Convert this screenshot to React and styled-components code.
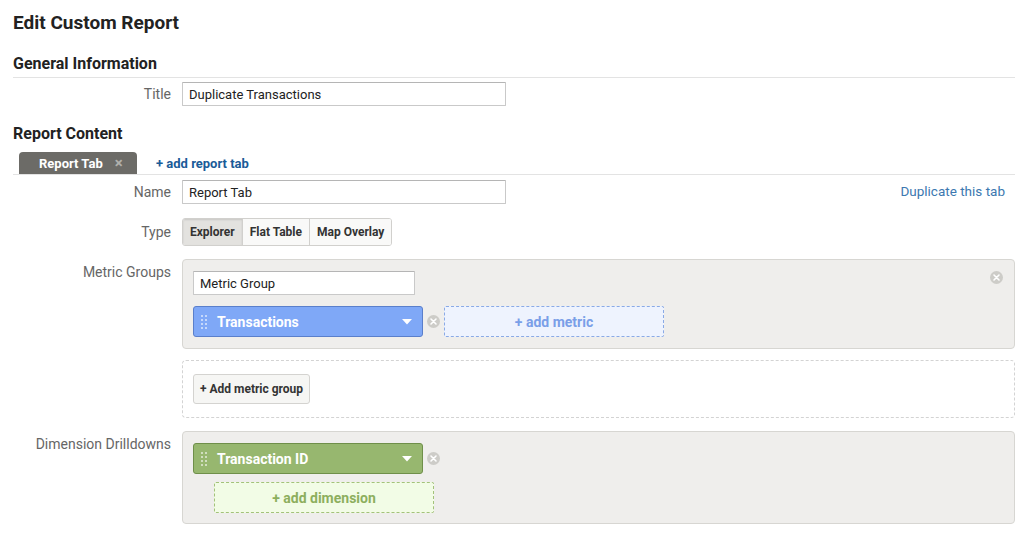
import React from 'react'
import styled, { createGlobalStyle } from 'styled-components'

const GlobalStyle = createGlobalStyle`
  html, body {
    margin: 0;
    padding: 0;
    background: #fff;
  }
  body {
    font-family: Roboto, "Liberation Sans", Arial, sans-serif;
    color: #222;
  }
`

const DragHandle = () => (
  <svg width="6" height="14" viewBox="0 0 6 14">
    {[0, 1, 2, 3].map((r) =>
      [0, 1].map((c) => (
        <rect key={`${r}-${c}`} x={c * 4} y={r * 4} width="2" height="2" fill="rgba(255,255,255,0.55)" />
      ))
    )}
  </svg>
)

const Caret = () => (
  <svg width="10" height="6" viewBox="0 0 10 6">
    <path d="M0 0 L10 0 L5 5.5 Z" fill="#fff" />
  </svg>
)

const RemoveIcon = () => (
  <svg width="13" height="13" viewBox="0 0 13 13">
    <circle cx="6.5" cy="6.5" r="6.5" fill="#cdccc8" />
    <path d="M4 4 L9 9 M9 4 L4 9" stroke="#fff" strokeWidth="1.6" strokeLinecap="round" />
  </svg>
)

const Chip = ({ label, variant }) => (
  <ChipBox $variant={variant}>
    <Handle>
      <DragHandle />
    </Handle>
    <ChipLabel>{label}</ChipLabel>
    <Caret />
  </ChipBox>
)

const App = () => {
  return (
    <Page>
      <GlobalStyle />
      <PageTitle>Edit Custom Report</PageTitle>

      <SectionHeader>General Information</SectionHeader>
      <FormRow $top={4}>
        <Label>Title</Label>
        <TextInput defaultValue="Duplicate Transactions" $width={324} />
      </FormRow>

      <SectionTitle>Report Content</SectionTitle>
      <TabBar>
        <Tab>
          Report Tab <TabClose>×</TabClose>
        </Tab>
        <AddTab>+ add report tab</AddTab>
      </TabBar>

      <FormRow $top={5}>
        <Label>Name</Label>
        <NameLine>
          <TextInput defaultValue="Report Tab" $width={324} />
          <LinkText>Duplicate this tab</LinkText>
        </NameLine>
      </FormRow>

      <FormRow $top={14}>
        <Label>Type</Label>
        <ButtonGroup>
          <TypeButton $active>Explorer</TypeButton>
          <TypeButton>Flat Table</TypeButton>
          <TypeButton>Map Overlay</TypeButton>
        </ButtonGroup>
      </FormRow>

      <FormRow $top={13} $align="start">
        <Label $pad>Metric Groups</Label>
        <Stack>
          <GroupBox>
            <CornerRemove>
              <RemoveIcon />
            </CornerRemove>
            <TextInput defaultValue="Metric Group" $width={222} />
            <ChipRow>
              <Chip label="Transactions" variant="metric" />
              <RemoveIcon />
              <DropZone $variant="metric">+ add metric</DropZone>
            </ChipRow>
          </GroupBox>
          <EmptyGroup>
            <SmallButton>+ Add metric group</SmallButton>
          </EmptyGroup>
        </Stack>
      </FormRow>

      <FormRow $top={13} $align="start">
        <Label $pad>Dimension Drilldowns</Label>
        <DimBox>
          <ChipRow>
            <Chip label="Transaction ID" variant="dimension" />
            <RemoveIcon />
          </ChipRow>
          <Indent>
            <DropZone $variant="dimension">+ add dimension</DropZone>
          </Indent>
        </DimBox>
      </FormRow>
    </Page>
  )
}

export default App

const Page = styled.div`
  padding: 11px 9px 0 13px;
  width: 1024px;
  box-sizing: border-box;
`

const PageTitle = styled.h1`
  margin: 0;
  font-size: 19px;
  line-height: 24px;
  font-weight: 700;
  color: #222;
`

const SectionTitle = styled.h2`
  margin: 18px 0 0;
  font-size: 16px;
  line-height: 20px;
  font-weight: 700;
  color: #222;
`

const SectionHeader = styled(SectionTitle)`
  margin-top: 19px;
  padding-bottom: 3px;
  border-bottom: 1px solid #e3e3e3;
`

const FormRow = styled.div`
  display: grid;
  grid-template-columns: 158px 1fr;
  column-gap: 11px;
  align-items: ${(p) => p.$align || 'center'};
  margin-top: ${(p) => p.$top || 0}px;
`

const Label = styled.div`
  text-align: right;
  font-size: 14px;
  line-height: 18px;
  color: #666;
  padding-top: ${(p) => (p.$pad ? '4px' : '0')};
`

const TextInput = styled.input`
  box-sizing: border-box;
  width: ${(p) => p.$width}px;
  height: 24px;
  margin: 0;
  padding: 0 6px;
  border: 1px solid #c9c9c9;
  border-top-color: #b5b5b5;
  border-radius: 1px;
  background: #fff;
  font-family: Roboto, "Liberation Sans", Arial, sans-serif;
  font-size: 13px;
  color: #222;
  outline: none;
`

const TabBar = styled.div`
  display: flex;
  align-items: flex-end;
  margin-top: 8px;
  padding-left: 6px;
  border-bottom: 1px solid #e3e3e3;
`

const Tab = styled.div`
  box-sizing: border-box;
  width: 118px;
  height: 22px;
  padding-left: 20px;
  display: flex;
  align-items: center;
  background: #6c6b67;
  border-radius: 4px 4px 0 0;
  color: #fff;
  font-size: 13px;
  font-weight: 700;
`

const TabClose = styled.span`
  margin-left: 12px;
  color: #b1b0ac;
  font-size: 15px;
  font-weight: 700;
`

const AddTab = styled.div`
  align-self: center;
  margin-left: 19px;
  color: #1a5b98;
  font-size: 13px;
  font-weight: 700;
`

const NameLine = styled.div`
  display: flex;
  align-items: center;
  justify-content: space-between;
  padding-right: 10px;
`

const LinkText = styled.span`
  margin-bottom: 3px;
  color: #3c78b0;
  font-size: 13.5px;
`

const ButtonGroup = styled.div`
  box-sizing: border-box;
  display: flex;
  height: 28px;
  border: 1px solid #d1d0cd;
  border-radius: 3px;
  overflow: hidden;
  width: max-content;
`

const TypeButton = styled.div`
  display: flex;
  align-items: center;
  padding: 0 7px;
  font-size: 12px;
  font-weight: 700;
  color: #333;
  background: ${(p) => (p.$active ? '#e3e2df' : '#f9f9f8')};
  box-shadow: ${(p) => (p.$active ? 'inset 0 1px 2px rgba(0,0,0,0.12)' : 'none')};
  & + & {
    border-left: 1px solid #d1d0cd;
  }
`

const Stack = styled.div`
  display: flex;
  flex-direction: column;
  gap: 11px;
`

const GroupBox = styled.div`
  position: relative;
  box-sizing: border-box;
  height: 90px;
  padding: 11px 10px;
  background: #efeeec;
  border: 1px solid #d7d6d2;
  border-radius: 4px;
`

const CornerRemove = styled.div`
  position: absolute;
  top: 11px;
  right: 11px;
  line-height: 0;
`

const ChipRow = styled.div`
  display: flex;
  align-items: center;
  gap: 4px;
  margin-top: 11px;
  &:first-child {
    margin-top: 0;
  }
`

const chipColors = {
  metric: { bg: '#7fa8f7', border: '#5a7fcb' },
  dimension: { bg: '#97b76f', border: '#6f8f4a' },
}

const ChipBox = styled.div`
  box-sizing: border-box;
  width: 230px;
  height: 31px;
  display: flex;
  align-items: center;
  padding: 0 10px 0 7px;
  background: ${(p) => chipColors[p.$variant].bg};
  border: 1px solid ${(p) => chipColors[p.$variant].border};
  border-radius: 3px;
`

const Handle = styled.div`
  line-height: 0;
  margin-right: 10px;
`

const ChipLabel = styled.span`
  flex: 1;
  color: #fff;
  font-size: 14px;
  font-weight: 700;
`

const dropColors = {
  metric: { bg: '#eef3fe', border: '#8aaae6', color: '#7a9fe8' },
  dimension: { bg: '#f2fce6', border: '#a3c27a', color: '#8daf5e' },
}

const DropZone = styled.div`
  box-sizing: border-box;
  width: 220px;
  height: 31px;
  display: flex;
  align-items: center;
  justify-content: center;
  background: ${(p) => dropColors[p.$variant].bg};
  border: 1px dashed ${(p) => dropColors[p.$variant].border};
  border-radius: 2px;
  color: ${(p) => dropColors[p.$variant].color};
  font-size: 14px;
  font-weight: 700;
`

const EmptyGroup = styled.div`
  box-sizing: border-box;
  height: 58px;
  padding: 13px 10px;
  border: 1px dashed #d3d3d3;
  border-radius: 4px;
`

const SmallButton = styled.div`
  box-sizing: border-box;
  width: 117px;
  height: 30px;
  display: flex;
  align-items: center;
  justify-content: center;
  background: #f6f6f4;
  border: 1px solid #d4d3d0;
  border-radius: 3px;
  font-size: 12px;
  font-weight: 700;
  color: #333;
`

const DimBox = styled.div`
  box-sizing: border-box;
  height: 93px;
  padding: 11px 10px;
  background: #efeeec;
  border: 1px solid #d7d6d2;
  border-radius: 4px;
`

const Indent = styled.div`
  margin-top: 8px;
  padding-left: 21px;
`
